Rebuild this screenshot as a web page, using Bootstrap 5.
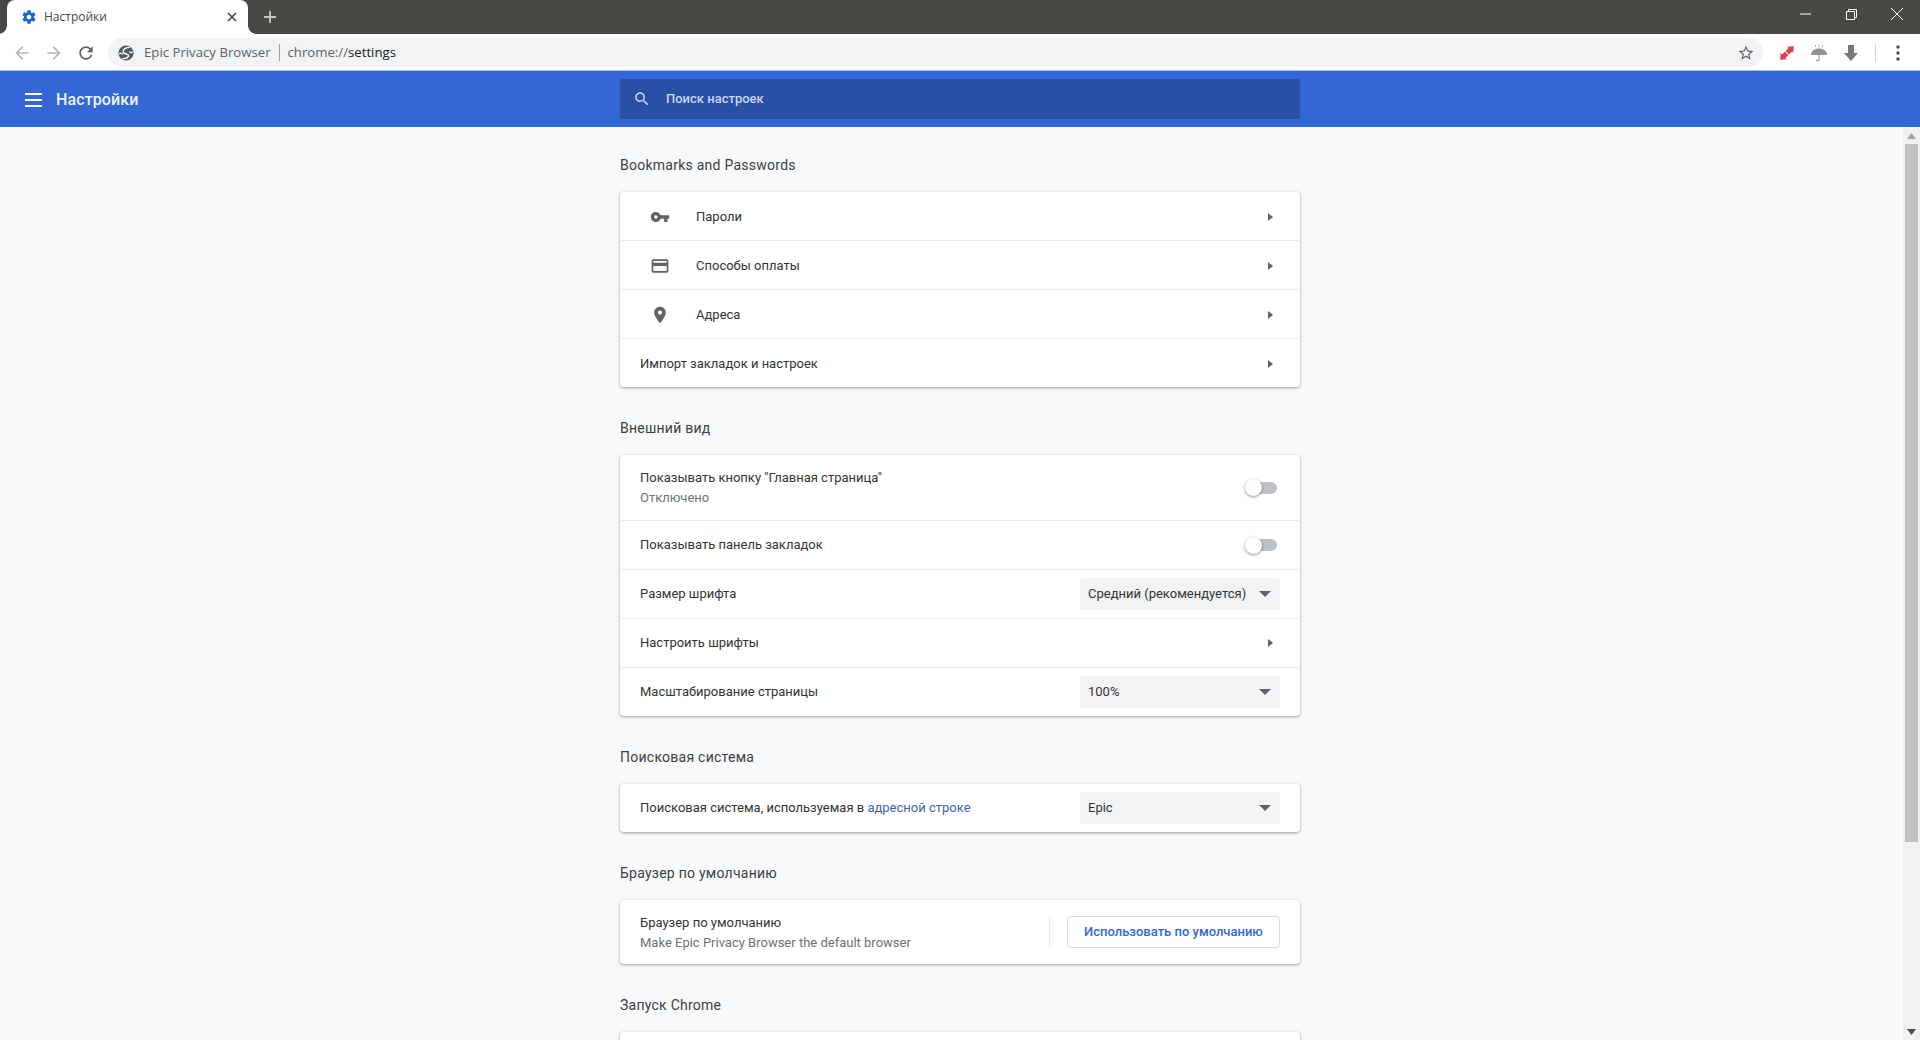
<!DOCTYPE html>
<html lang="ru">
<head>
<meta charset="utf-8">
<title>Настройки</title>
<link href="https://cdn.jsdelivr.net/npm/bootstrap@5.3.0/dist/css/bootstrap.min.css" rel="stylesheet">
<style>
html,body{height:1040px;overflow:hidden}
body{font-family:Roboto,"Liberation Sans",sans-serif;font-size:13px;color:#333;background:#f8f9fa}
.shell{height:1040px}
.flex-none{flex:none}
.tabstrip{height:34px;background:#4a4845;padding-left:7px}
.chrome-tab{position:relative;width:241px;height:34px;background:#fff;border-radius:8px 8px 0 0;padding:0 11px 0 14px;font-family:"Open Sans","Liberation Sans",sans-serif;font-size:12px;color:#45474a}
.chrome-tab::before,.chrome-tab::after{content:"";position:absolute;bottom:0;width:8px;height:8px}
.chrome-tab::before{left:-8px;background:radial-gradient(circle at 0 0,transparent 7.5px,#fff 8px)}
.chrome-tab::after{right:-8px;background:radial-gradient(circle at 100% 0,transparent 7.5px,#fff 8px)}
.tab-title{margin-left:7px}
.tab-plus{margin-left:15px;color:#c4c4c4}
.winctl{width:46px;height:28px}
.toolbar{height:37px;background:#fff;padding:1px 0 0 6px;border-bottom:1px solid #a9bbdc}
.navbtn{width:32px}
.omni{width:1655px;height:29px;margin-left:6px;background:#f1f3f4;border-radius:15px;padding:0 8px 0 10px;font-family:"Open Sans","Liberation Sans",sans-serif;font-size:13.2px;color:#5f6368}
.epicmark{margin-right:10px}
.omni-sep{width:1px;height:17px;background:#9aa0a6;margin:0 8px}
.omni-path{color:#202124}
.extbtn{width:32px}
.ext-first{margin-left:8px}
.ext-sep{width:1px;height:18px;background:#d3d5d7;margin:0 6px 0 8px}
.apphead{height:56px;background:#3367d6;flex:none}
.headleft{width:620px;padding-left:25px;padding-top:2px;color:#fff}
.apptitle{margin-left:14px;font-size:16px;font-weight:500;letter-spacing:.1px;color:#eef3fc}
.searchbox{width:680px;height:40px;background:#2a50a6;border-radius:1px;padding-left:13px;color:#c9d6f2;font-size:13px;font-weight:500}
.searchbox span{margin-left:15px}
.pagebody{min-height:0}
.pagescroll{overflow:hidden;padding-left:620px;padding-top:22px}
.column{width:680px}
.sect-title{height:43px;margin:0;padding-top:6px;font-size:14px;font-weight:400;letter-spacing:.25px;color:#3c4043;line-height:20px}
.mt-section{margin-top:25px}
.setcard{border:0;border-radius:4px;background:#fff;box-shadow:0 1px 2px rgba(60,64,67,.3),0 1px 3px 1px rgba(60,64,67,.15)}
.setrow{height:49px;padding:0 20px 0 20px;border-top:1px solid #ebebeb;color:#333;font-size:13px}
.setrow:first-child{border-top:0;height:48px}
.setcard-first .setrow{padding-top:1px}
.setrow-tall,.setrow-tall:first-child{height:65px}
.setrow-compact:first-child{height:64px}
.iconcell{width:36px;margin-right:18px;margin-left:2px}
.subtext{color:#6d7175;margin-top:5px;line-height:15px}
.mainline{line-height:15px}
.caret-right{width:0;height:0;border-left:5px solid #5f6368;border-top:4px solid transparent;border-bottom:4px solid transparent;margin-right:7px}
.toggle-wrap{position:relative;width:30px;height:12px;background:#bdc1c6;border-radius:6px;margin-right:3px}
.toggle-wrap::after{content:"";position:absolute;left:-2px;top:-2.5px;width:17px;height:17px;border-radius:50%;background:#fff;box-shadow:0 1px 3px rgba(0,0,0,.45)}
.chooser{width:200px;height:32px;background:#f1f3f4;border-radius:3px;padding:0 9px 0 8px;color:#333}
.caret-down{width:0;height:0;border-top:6px solid #5f6368;border-left:6px solid transparent;border-right:6px solid transparent}
.linktext{color:#3f64b0;text-decoration:none}
.vrule{width:1px;height:32px;background:#e8eaed;margin-right:17px}
.usebtn{width:213px;height:32px;padding:0;background:#fff;border:1px solid #dadce0;border-radius:4px;color:#3367d6;font-size:13px;font-weight:500}
.scrolltrack{width:17px;background:#f1f1f1;flex:none;padding:0 2px}
.scrollcap{height:17px;flex:none}
.scrollthumb{height:698px;background:#c1c1c1;flex:none}
</style>
</head>
<body>
<div class="shell d-flex flex-column">
  <div class="tabstrip d-flex align-items-start flex-none">
    <div class="chrome-tab d-flex align-items-center">
      <svg width="16" height="16" viewBox="0 0 24 24" fill="#1a66d0"><path d="M19.43 12.98c.04-.32.07-.64.07-.98s-.03-.66-.07-.98l2.11-1.65c.19-.15.24-.42.12-.64l-2-3.46c-.12-.22-.39-.3-.61-.22l-2.49 1c-.52-.4-1.08-.73-1.69-.98l-.38-2.65C14.46 2.18 14.25 2 14 2h-4c-.25 0-.46.18-.49.42l-.38 2.65c-.61.25-1.17.59-1.69.98l-2.49-1c-.23-.09-.49 0-.61.22l-2 3.46c-.13.22-.07.49.12.64l2.11 1.65c-.04.32-.07.65-.07.98s.03.66.07.98l-2.11 1.65c-.19.15-.24.42-.12.64l2 3.46c.12.22.39.3.61.22l2.49-1c.52.4 1.08.73 1.69.98l.38 2.65c.03.24.24.42.49.42h4c.25 0 .46-.18.49-.42l.38-2.65c.61-.25 1.17-.59 1.69-.98l2.49 1c.23.09.49 0 .61-.22l2-3.46c.12-.22.07-.49-.12-.64l-2.11-1.65zM12 15.5c-1.93 0-3.5-1.57-3.5-3.5s1.57-3.5 3.5-3.5 3.5 1.57 3.5 3.5-1.57 3.5-3.5 3.5z"/></svg>
      <span class="tab-title flex-grow-1">Настройки</span>
      <svg width="10" height="10" viewBox="0 0 10 10" stroke="#45474a" stroke-width="1.6"><path d="M1 1l8 8M9 1l-8 8"/></svg>
    </div>
    <div class="tab-plus align-self-center d-flex">
      <svg width="14" height="14" viewBox="0 0 14 14" stroke="#c4c4c4" stroke-width="1.8"><path d="M7 1v12M1 7h12"/></svg>
    </div>
    <div class="ms-auto d-flex align-items-center">
      <div class="winctl d-flex align-items-center justify-content-center"><svg width="11" height="2" viewBox="0 0 11 2" stroke="#fff"><path d="M0 1h11"/></svg></div>
      <div class="winctl d-flex align-items-center justify-content-center"><svg width="11" height="11" viewBox="0 0 11 11" fill="none" stroke="#fff"><path d="M.5 2.5h8v8h-8zM2.5 2.5v-2h8v8h-2"/></svg></div>
      <div class="winctl d-flex align-items-center justify-content-center"><svg width="14" height="14" viewBox="0 0 14 14" stroke="#fff" stroke-width="1"><path d="M1 1l12 12M13 1L1 13"/></svg></div>
    </div>
  </div>

  <div class="toolbar d-flex align-items-center flex-none">
    <div class="navbtn d-flex justify-content-center"><svg width="20" height="20" viewBox="0 0 24 24" fill="#b4b6b8"><path d="M20 11H7.83l5.59-5.59L12 4l-8 8 8 8 1.41-1.41L7.83 13H20v-2z"/></svg></div>
    <div class="navbtn d-flex justify-content-center"><svg width="20" height="20" viewBox="0 0 24 24" fill="#b4b6b8"><path d="M4 11h12.17l-5.59-5.59L12 4l8 8-8 8-1.41-1.41L16.17 13H4v-2z"/></svg></div>
    <div class="navbtn d-flex justify-content-center"><svg width="20" height="20" viewBox="0 0 24 24" fill="#5f6368"><path d="M17.65 6.35C16.2 4.9 14.21 4 12 4c-4.42 0-7.99 3.58-7.99 8s3.57 8 7.99 8c3.73 0 6.84-2.55 7.73-6h-2.08c-.82 2.33-3.04 4-5.65 4-3.31 0-6-2.69-6-6s2.69-6 6-6c1.66 0 3.14.69 4.22 1.78L13 11h7V4l-2.35 2.35z"/></svg></div>
    <div class="omni d-flex align-items-center">
      <svg class="epicmark" width="16" height="16" viewBox="0 0 16 16" fill="#55595d"><circle cx="8" cy="8" r="7.6"/><path d="M12 2.200C7.500 2.200 4.300 4.700 5.300 7.400c.8 2 4.800 1 5.300 3 .4 1.700-2.200 3.500-6.600 3.400" fill="none" stroke="#f1f3f4" stroke-width="1.500"/><path d="M1.200 9.300C2.500 7.600 3.600 8 4.600 9.600M14.800 6.700C13.500 8.400 12.400 8 11.400 6.400" fill="none" stroke="#f1f3f4" stroke-width="1.300"/></svg>
      <span>Epic Privacy Browser</span>
      <span class="omni-sep"></span>
      <span>chrome://<span class="omni-path">settings</span></span>
      <svg class="ms-auto" width="18" height="18" viewBox="0 0 24 24" fill="#5f6368"><path d="M22 9.24l-7.19-.62L12 2 9.19 8.63 2 9.24l5.46 4.73L5.82 21 12 17.27 18.18 21l-1.63-7.03L22 9.24zM12 15.4l-3.76 2.27 1-4.28-3.32-2.88 4.38-.38L12 6.1l1.71 4.04 4.38.38-3.32 2.88 1 4.28L12 15.4z"/></svg>
    </div>
    <div class="extbtn ext-first d-flex justify-content-center"><svg width="20" height="20" viewBox="0 0 20 20" fill="#e2404f"><g transform="rotate(-45 10 10)"><path d="M.5 10L5.500 5.500v2h4v5h-4v2z"/><path d="M19.500 10L14.500 5.500v2h-4v5h4v2z"/></g></svg></div>
    <div class="extbtn d-flex justify-content-center"><svg width="18" height="18" viewBox="0 0 18 18" fill="#8f9396"><path d="M1 11C1.300 6.800 4.500 4.500 9 4.500s7.700 2.300 8 6.500z"/><path d="M9 10v5.500c0 1.500-2.500 1.500-2.500 0" fill="none" stroke="#8f9396" stroke-width="1.100"/><path d="M9 .5v2M5.500 1v1.500M12.500 1v1.500" stroke="#8f9396" stroke-width=".9"/></svg></div>
    <div class="extbtn d-flex justify-content-center"><svg width="16" height="18" viewBox="0 0 16 18" fill="#76797c"><path d="M5 1h6v8h4l-7 8-7-8h4z"/></svg></div>
    <div class="ext-sep"></div>
    <div class="navbtn d-flex justify-content-center"><svg width="4" height="16" viewBox="0 0 4 16" fill="#4a4d50"><circle cx="2" cy="2" r="1.700"/><circle cx="2" cy="8" r="1.700"/><circle cx="2" cy="14" r="1.700"/></svg></div>
  </div>

  <div class="apphead d-flex align-items-center">
    <div class="headleft d-flex align-items-center">
      <svg width="17" height="14" viewBox="0 0 17 14" fill="#fff"><path d="M0 0h17v2H0zM0 6h17v2H0zM0 12h17v2H0z"/></svg>
      <span class="apptitle">Настройки</span>
    </div>
    <div class="searchbox d-flex align-items-center">
      <svg width="18" height="18" viewBox="0 0 24 24" fill="#c8d4f0"><path d="M15.500 14h-.79l-.28-.27C15.410 12.590 16 11.110 16 9.500 16 5.910 13.090 3 9.500 3S3 5.910 3 9.500 5.910 16 9.500 16c1.610 0 3.090-.59 4.230-1.570l.27.280v.79l5 4.990L20.490 19l-4.990-5zm-6 0C7.010 14 5 11.990 5 9.500S7.010 5 9.500 5 14 7.010 14 9.500 11.990 14 9.500 14z"/></svg>
      <span>Поиск настроек</span>
    </div>
  </div>

  <div class="pagebody d-flex flex-grow-1">
    <div class="pagescroll flex-grow-1">
      <div class="column">
        <h2 class="sect-title">Bookmarks and Passwords</h2>
        <div class="card setcard setcard-first">
          <div class="setrow d-flex align-items-center"><div class="iconcell d-flex justify-content-center"><svg width="20" height="20" viewBox="0 0 24 24" fill="#5f6368"><path d="M12.650 10C11.830 7.670 9.610 6 7 6c-3.310 0-6 2.690-6 6s2.690 6 6 6c2.610 0 4.830-1.670 5.650-4H17v4h4v-4h2v-4H12.650zM7 14c-1.100 0-2-.9-2-2s.9-2 2-2 2 .9 2 2-.9 2-2 2z"/></svg></div><span class="flex-grow-1">Пароли</span><div class="caret-right"></div></div>
          <div class="setrow d-flex align-items-center"><div class="iconcell d-flex justify-content-center"><svg width="20" height="20" viewBox="0 0 24 24" fill="#5f6368"><path d="M20 4H4c-1.110 0-1.990.89-1.990 2L2 18c0 1.110.89 2 2 2h16c1.110 0 2-.89 2-2V6c0-1.110-.89-2-2-2zm0 14H4v-6h16v6zm0-10H4V6h16v2z"/></svg></div><span class="flex-grow-1">Способы оплаты</span><div class="caret-right"></div></div>
          <div class="setrow d-flex align-items-center"><div class="iconcell d-flex justify-content-center"><svg width="20" height="20" viewBox="0 0 24 24" fill="#5f6368"><path d="M12 2C8.130 2 5 5.130 5 9c0 5.250 7 13 7 13s7-7.750 7-13c0-3.870-3.130-7-7-7zm0 9.500c-1.380 0-2.500-1.120-2.500-2.500s1.120-2.500 2.500-2.500 2.500 1.120 2.500 2.500-1.120 2.500-2.500 2.500z"/></svg></div><span class="flex-grow-1">Адреса</span><div class="caret-right"></div></div>
          <div class="setrow d-flex align-items-center"><span class="flex-grow-1">Импорт закладок и настроек</span><div class="caret-right"></div></div>
        </div>

        <h2 class="sect-title mt-section">Внешний вид</h2>
        <div class="card setcard">
          <div class="setrow setrow-tall d-flex align-items-center"><div class="flex-grow-1"><div class="mainline">Показывать кнопку "Главная страница"</div><div class="subtext">Отключено</div></div><div class="toggle-wrap"></div></div>
          <div class="setrow d-flex align-items-center"><span class="flex-grow-1">Показывать панель закладок</span><div class="toggle-wrap"></div></div>
          <div class="setrow d-flex align-items-center"><span class="flex-grow-1">Размер шрифта</span><div class="chooser d-flex align-items-center justify-content-between"><span>Средний (рекомендуется)</span><span class="caret-down"></span></div></div>
          <div class="setrow d-flex align-items-center"><span class="flex-grow-1">Настроить шрифты</span><div class="caret-right"></div></div>
          <div class="setrow d-flex align-items-center"><span class="flex-grow-1">Масштабирование страницы</span><div class="chooser d-flex align-items-center justify-content-between"><span>100%</span><span class="caret-down"></span></div></div>
        </div>

        <h2 class="sect-title mt-section">Поисковая система</h2>
        <div class="card setcard">
          <div class="setrow d-flex align-items-center"><span class="flex-grow-1">Поисковая система, используемая в <a class="linktext" href="#">адресной строке</a></span><div class="chooser d-flex align-items-center justify-content-between"><span>Epic</span><span class="caret-down"></span></div></div>
        </div>

        <h2 class="sect-title mt-section">Браузер по умолчанию</h2>
        <div class="card setcard">
          <div class="setrow setrow-tall setrow-compact d-flex align-items-center"><div class="flex-grow-1"><div class="mainline">Браузер по умолчанию</div><div class="subtext">Make Epic Privacy Browser the default browser</div></div><div class="vrule"></div><button type="button" class="btn usebtn">Использовать по умолчанию</button></div>
        </div>

        <h2 class="sect-title mt-section">Запуск Chrome</h2>
        <div class="card setcard">
          <div class="setrow"></div>
        </div>
      </div>
    </div>
    <div class="scrolltrack d-flex flex-column">
      <div class="scrollcap d-flex align-items-center justify-content-center"><svg width="9" height="6" viewBox="0 0 9 6" fill="#a3a3a3"><path d="M4.500 0L9 6H0z"/></svg></div>
      <div class="scrollthumb"></div>
      <div class="flex-grow-1"></div>
      <div class="scrollcap d-flex align-items-center justify-content-center"><svg width="9" height="6" viewBox="0 0 9 6" fill="#505050"><path d="M0 0h9L4.500 6z"/></svg></div>
    </div>
  </div>
</div>
<script src="https://cdn.jsdelivr.net/npm/bootstrap@5.3.0/dist/js/bootstrap.bundle.min.js"></script>
</body>
</html>
